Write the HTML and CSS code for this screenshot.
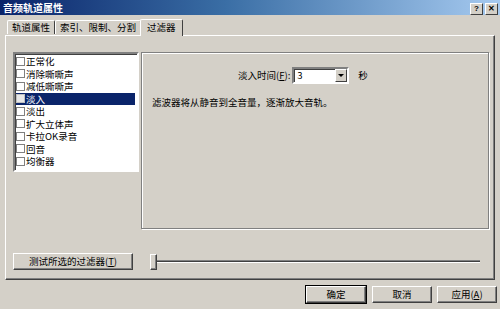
FILE: index.html
```html
<!DOCTYPE html>
<html lang="zh-CN">
<head>
    <meta charset="UTF-8">
    <title>音频轨道属性</title>
    <link rel="stylesheet" href="styles.css">
</head>
<body>

<div id="dialog">
    <div class="titlebar">
        <span class="title">音频轨道属性</span>
        <div class="caption-buttons">
            <div class="cap-btn">?</div>
            <div class="cap-btn">&#x2715;</div>
        </div>
    </div>

    <div class="tabs">
        <div class="tab">轨道属性</div>
        <div class="tab">索引、限制、分割</div>
        <div class="tab active">过滤器</div>
    </div>

    <div class="panel">
        <div class="top-row">
            <div class="listbox">
                <div class="item"><span class="check"></span>正常化</div>
                <div class="item"><span class="check"></span>消除嘶嘶声</div>
                <div class="item"><span class="check"></span>减低嘶嘶声</div>
                <div class="item selected"><span class="check"></span>淡入</div>
                <div class="item"><span class="check"></span>淡出</div>
                <div class="item"><span class="check"></span>扩大立体声</div>
                <div class="item"><span class="check"></span>卡拉OK录音</div>
                <div class="item"><span class="check"></span>回音</div>
                <div class="item"><span class="check"></span>均衡器</div>
            </div>
            <div class="groupbox">
                <div class="field-row">
                    <span class="label">淡入时间(<u>F</u>):</span>
                    <div class="combo">
                        <span class="combo-value">3</span>
                        <span class="combo-arrow"></span>
                    </div>
                    <span class="unit">秒</span>
                </div>
                <div class="desc">滤波器将从静音到全音量，逐渐放大音轨。</div>
            </div>
        </div>
        <div class="bottom-row">
            <div class="button test-btn">测试所选的过滤器(<u>T</u>)</div>
            <div class="slider">
                <div class="thumb"></div>
                <div class="track"></div>
            </div>
        </div>
    </div>

    <div class="footer">
        <div class="button default">确定</div>
        <div class="button">取消</div>
        <div class="button">应用(<u>A</u>)</div>
    </div>
</div>

</body>
</html>
```

FILE: styles.css
```css
body {
    margin: 0;
    background-color: #d4d0c8;
    font-family: "Noto Sans CJK SC", "Liberation Sans", sans-serif;
    font-size: 9.5px;
    color: #000;
}
#dialog {
    width: 500px;
    height: 309px;
    overflow: hidden;
    display: flex;
    flex-direction: column;
}
.titlebar {
    height: 15px;
    flex: none;
    background: linear-gradient(to right, #0a246a 0%, #3a6ea5 45%, #a6caf0 100%);
    display: flex;
    justify-content: space-between;
    align-items: center;
    padding: 0 2px 0 3px;
}
.title {
    color: white;
    font-weight: bold;
    font-size: 10px;
    line-height: 15px;
}
.caption-buttons {
    display: flex;
    gap: 2px;
    margin-top: 2px;
}
.cap-btn {
    width: 11px;
    height: 10px;
    background-color: #d4d0c8;
    border: 1px solid;
    border-color: #fff #404040 #404040 #fff;
    font-size: 8px;
    font-weight: bold;
    line-height: 10px;
    text-align: center;
    font-family: "Liberation Sans", sans-serif;
}

/* tabs */
.tabs {
    display: flex;
    align-items: flex-end;
    height: 20px;
    flex: none;
    padding-left: 7px;
    position: relative;
    z-index: 1;
}
.tab {
    height: 13px;
    line-height: 13px;
    padding: 0 4px;
    border: 1px solid;
    border-color: #fff #404040 transparent #fff;
    border-bottom: none;
    border-radius: 2px 2px 0 0;
    margin-bottom: 1px;
}
.tab.active {
    height: 16px;
    line-height: 15px;
    margin: 0 0 -1px -1px;
    padding: 0 6px;
    background-color: #d4d0c8;
}

.panel {
    flex: none;
    margin: 0 5px;
    height: 227px;
    border: 1px solid;
    border-color: #fff #404040 #404040 #fff;
    box-shadow: inset -1px -1px 0 #808080;
    display: flex;
    flex-direction: column;
    padding: 16px 0 0 7px;
}
.top-row {
    display: flex;
    gap: 2px;
    align-items: flex-start;
}

/* list */
.listbox {
    width: 119px;
    height: 115px;
    background: white;
    border: 2px solid;
    border-color: #808080 #fff #fff #808080;
    box-shadow: inset 1px 1px 0 #404040;
    padding: 1px 2px 0 1px;
}
.item {
    height: 12.5px;
    line-height: 12.5px;
    display: flex;
    align-items: center;
    white-space: nowrap;
}
.item.selected {
    background-color: #0a246a;
    color: white;
}
.check {
    width: 7px;
    height: 7px;
    border: 1px solid #808080;
    background: white;
    margin-right: 1px;
    flex: none;
}
.item.selected .check {
    border-color: #c0c0c0;
    background: #e8e8e8;
}

/* group */
.groupbox {
    width: 336px;
    height: 161px;
    border: 1px solid #808080;
    box-shadow: inset 1px 1px 0 #fff, 1px 1px 0 #fff;
    padding: 14px 0 0 10px;
}
.field-row {
    display: flex;
    align-items: center;
    height: 16px;
    padding-left: 86px;
}
.label {
    margin-right: 2px;
}
.combo {
    width: 53px;
    height: 13px;
    background: white;
    border: 2px solid;
    border-color: #808080 #fff #fff #808080;
    box-shadow: inset 1px 1px 0 #404040;
    display: flex;
    justify-content: space-between;
}
.combo-value {
    padding-left: 3px;
    line-height: 13px;
}
.combo-arrow {
    width: 10px;
    height: 11px;
    background-color: #d4d0c8;
    border: 1px solid;
    border-color: #fff #404040 #404040 #fff;
    position: relative;
}
.combo-arrow::after {
    content: "";
    position: absolute;
    left: 2px;
    top: 4px;
    border-left: 3px solid transparent;
    border-right: 3px solid transparent;
    border-top: 3px solid #000;
}
.unit {
    margin-left: 9px;
}
.desc {
    margin-top: 13px;
    line-height: 12px;
}

/* bottom controls */
.bottom-row {
    display: flex;
    align-items: center;
    margin-top: 24px;
    gap: 17px;
}
.button {
    height: 15px;
    line-height: 15px;
    text-align: center;
    background-color: #d4d0c8;
    border: 1px solid;
    border-color: #fff #404040 #404040 #fff;
    box-shadow: inset -1px -1px 0 #808080;
    white-space: nowrap;
}
.test-btn {
    width: 118px;
}
.slider {
    display: flex;
    align-items: center;
    width: 330px;
}
.thumb {
    width: 5px;
    height: 14px;
    background-color: #d4d0c8;
    border: 1px solid;
    border-color: #fff #404040 #404040 #fff;
    box-shadow: inset -1px -1px 0 #808080;
    flex: none;
}
.track {
    flex: 1;
    height: 1px;
    border-top: 1px solid #808080;
    border-bottom: 1px solid #fff;
    background: #404040;
}

/* dialog buttons */
.footer {
    display: flex;
    justify-content: flex-end;
    gap: 5px;
    padding: 6px 3px 0 0;
}
.footer .button {
    width: 58px;
}
.footer .button.default {
    outline: 1px solid #000;
    outline-offset: 0;
    margin-right: 1px;
}
```
